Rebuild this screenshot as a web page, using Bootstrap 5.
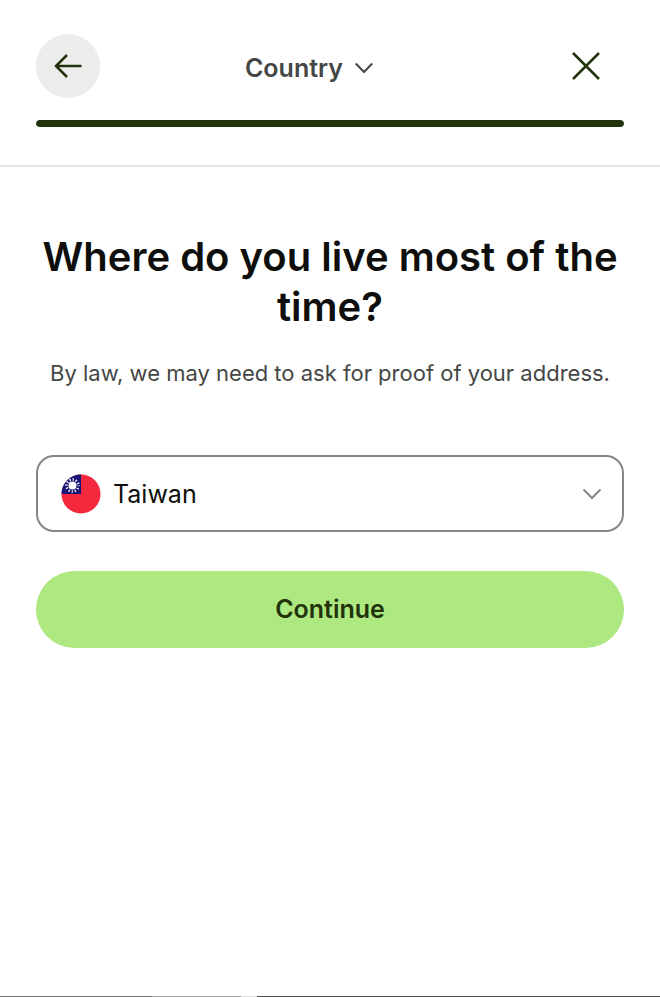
<!DOCTYPE html>
<html lang="en">
<head>
<meta charset="utf-8">
<meta name="viewport" content="width=device-width, initial-scale=1">
<title>Country</title>
<link href="https://cdn.jsdelivr.net/npm/bootstrap@5.3.0/dist/css/bootstrap.min.css" rel="stylesheet">
<style>
body { font-family: "Inter", sans-serif; color: #0e0f0c; }
.page-gutter { padding-left: 36px; padding-right: 36px; }
.site-header { padding-top: 34px; padding-bottom: 38px; border-bottom: 2px solid #e6e6e6; }
.back-btn { width: 64px; height: 64px; background: #ececeb; color: #20330b; }
.close-btn { width: 76px; height: 64px; margin-left: 30px; color: #20330b; }
.step-btn { gap: 12px; font-size: 25px; line-height: 32px; font-weight: 600; color: #454745; }
.step-progress { height: 7px; margin-top: 22px; --bs-progress-bar-bg: #20330b; --bs-progress-bg: #e6e6e6; --bs-progress-border-radius: 4px; }
.site-main { padding-top: 65px; }
.page-title { font-size: 40px; line-height: 50px; font-weight: 600; margin-bottom: 24px; }
.page-note { font-size: 22px; line-height: 34px; color: #454745; margin-bottom: 65px; }
.country-field { height: 77px; padding: 0 20px 0 23px; border: 2px solid #868685; border-radius: 18px; gap: 12px; }
.country-field select { appearance: none; background: transparent; outline: 0; font-size: 25px; line-height: 36px; color: #0e0f0c; }
.continue-btn { height: 77px; margin-top: 39px; font-size: 25px; font-weight: 600; --bs-btn-bg: #aee880; --bs-btn-color: #20330b; --bs-btn-hover-bg: #9edc6f; --bs-btn-hover-color: #20330b; --bs-btn-active-bg: #8fcf60; }
.edge-line { height: 1px; background: linear-gradient(90deg, #747272 0 23%, #a9a7a7 23% 36.5%, #dedede 36.5% 39%, #514f4f 39%); }
</style>
<script src="https://cdn.jsdelivr.net/npm/bootstrap@5.3.0/dist/js/bootstrap.bundle.min.js" defer></script>
</head>
<body class="bg-white d-flex flex-column min-vh-100">
<header class="site-header page-gutter">
  <div class="d-flex align-items-center">
    <button type="button" class="back-btn btn border-0 rounded-circle p-0 d-flex align-items-center justify-content-center flex-shrink-0" aria-label="Back">
      <svg width="32" height="28" viewBox="0 0 32 28" fill="none" stroke="currentColor" stroke-width="2.5" aria-hidden="true"><path d="M15 3 4 14l11 11M4 14h25.500"/></svg>
    </button>
    <div class="flex-grow-1 d-flex justify-content-center">
      <button type="button" class="step-btn btn border-0 px-0 pt-1 pb-0 d-flex align-items-center" aria-expanded="false">
        <span>Country</span>
        <svg width="18" height="12" viewBox="0 0 18 12" fill="none" stroke="currentColor" stroke-width="2" aria-hidden="true"><path d="m.8 1.500 8.200 8.500 8.200-8.500"/></svg>
      </button>
    </div>
    <button type="button" class="close-btn btn border-0 p-0 d-flex align-items-center justify-content-center flex-shrink-0" aria-label="Close">
      <svg width="30" height="30" viewBox="0 0 30 30" fill="none" stroke="currentColor" stroke-width="2.5" aria-hidden="true"><path d="m2 2 26 26M28 2 2 28"/></svg>
    </button>
  </div>
  <div class="progress step-progress" role="progressbar" aria-label="Progress" aria-valuenow="100" aria-valuemin="0" aria-valuemax="100">
    <div class="progress-bar w-100 rounded-pill"></div>
  </div>
</header>
<main class="site-main page-gutter flex-grow-1">
  <h1 class="page-title text-center">Where do you live most of the time?</h1>
  <p class="page-note text-center">By law, we may need to ask for proof of your address.</p>
  <form>
    <div class="country-field d-flex align-items-center">
      <svg class="flex-shrink-0" width="40" height="40" viewBox="0 0 40 40" aria-hidden="true">
        <defs><clipPath id="disc"><circle cx="20" cy="20" r="19.500"/></clipPath></defs>
        <g clip-path="url(#disc)">
          <path fill="#f5293e" d="M0 0h40v40H0z"/>
          <path fill="#1b1477" d="M0 0h20v20H0z"/>
          <circle cx="11.500" cy="11.500" r="4" fill="#fff"/>
          <circle cx="11.500" cy="11.500" r="6" fill="none" stroke="#fff" stroke-width="2.600" stroke-dasharray="1.2 1.942" stroke-dashoffset=".6"/>
        </g>
      </svg>
      <select class="flex-grow-1 border-0 p-0" aria-label="Country of residence" id="country">
        <option selected>Taiwan</option>
      </select>
      <svg class="flex-shrink-0" width="20" height="12" viewBox="0 0 20 12" fill="none" stroke="#868685" stroke-width="2" aria-hidden="true"><path d="m1.500 1.500 8.500 8.500 8.500-8.500"/></svg>
    </div>
    <button type="submit" class="continue-btn btn border-0 rounded-pill w-100">Continue</button>
  </form>
</main>
<footer class="edge-line"></footer>
</body>
</html>
